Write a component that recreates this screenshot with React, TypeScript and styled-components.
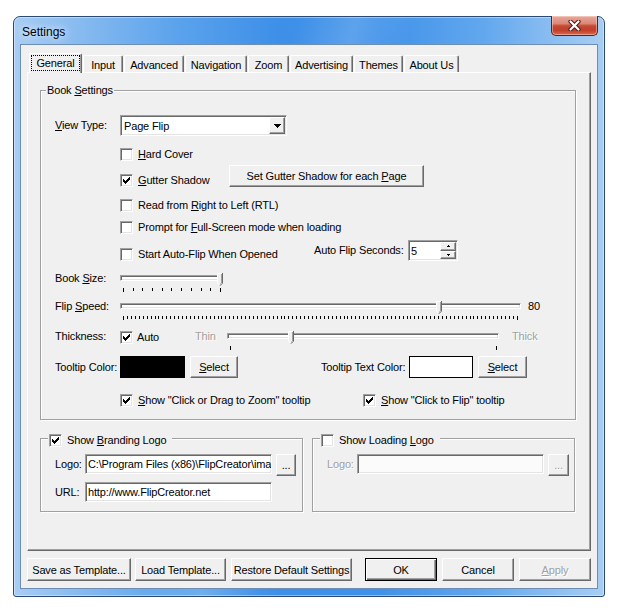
import styled, { createGlobalStyle, css } from 'styled-components';

const GlobalStyle = createGlobalStyle`
  body {
    margin: 0;
    background: #ffffff;
    color: #000000;
    font-family: 'Liberation Sans', Arial, sans-serif;
    font-size: 11px;
    letter-spacing: -0.15px;
  }
`;

const raised = css`
  border: 1px solid;
  border-color: #ffffff #696969 #696969 #ffffff;
  box-shadow: inset -1px -1px 0 #a0a0a0;
  background: #f0f0f0;
`;

const sunken = css`
  border: 1px solid;
  border-color: #a0a0a0 #ffffff #ffffff #a0a0a0;
  box-shadow: inset 1px 1px 0 #696969, inset -1px -1px 0 #e3e3e3;
`;

const Page = styled.div`
  padding: 16px 0 0 13px;
`;

const Window = styled.div`
  box-sizing: border-box;
  display: flex;
  flex-direction: column;
  width: 592px;
  height: 581px;
  padding: 0 6px 7px;
  border: 1px solid #2a4a73;
  border-radius: 7px 7px 3px 3px;
  background:
    linear-gradient(105deg, rgba(255, 255, 255, 0) 38%, rgba(255, 255, 255, 0.16) 46%, rgba(255, 255, 255, 0) 54%),
    linear-gradient(90deg, #a8cdf3 0%, #8abcf0 10%, #5aa2ec 28%, #3d8fe8 45%, #3f91e9 62%, #63a8ee 80%, #94c3f2 94%, #a8cdf3 100%);
  box-shadow: inset 0 0 0 1px rgba(255, 255, 255, 0.4);
`;

const TitleBar = styled.div`
  display: flex;
  height: 27px;
  padding-left: 2px;
`;

const Title = styled.span`
  align-self: center;
  margin-top: 3px;
  font-size: 12px;
  letter-spacing: 0;
  text-shadow: 0 0 6px rgba(255, 255, 255, 0.9), 0 0 12px rgba(255, 255, 255, 0.6);
`;

const CloseButton = styled.div`
  box-sizing: border-box;
  display: flex;
  align-items: center;
  justify-content: center;
  width: 47px;
  height: 20px;
  margin: -1px 0 0 auto;
  border: 1px solid #5b2219;
  border-top: none;
  border-radius: 0 0 5px 5px;
  background: linear-gradient(#e9a99c 0%, #dc8776 40%, #c24a33 52%, #c23f2a 75%, #d9684f 100%);
  box-shadow: inset 0 0 0 1px rgba(255, 230, 220, 0.45);
`;

const Client = styled.div`
  flex: 1;
  display: flex;
  flex-direction: column;
  padding: 8px 6px 7px;
  border: 1px solid #6e8db4;
  background: #f0f0f0;
`;

const TabStrip = styled.div`
  display: flex;
  align-items: flex-end;
  height: 19px;
  padding-left: 2px;
`;

const Tab = styled.div<{ $w: number; $active?: boolean }>`
  box-sizing: border-box;
  display: flex;
  align-items: center;
  justify-content: center;
  width: ${(p) => p.$w}px;
  height: 17px;
  margin-right: 1px;
  padding-top: 1px;
  border: 1px solid;
  border-color: #ffffff #696969 transparent #ffffff;
  border-bottom: none;
  border-radius: 2px 2px 0 0;
  box-shadow: inset -1px 0 0 #a0a0a0;
  white-space: nowrap;

  ${(p) =>
    p.$active &&
    css`
      position: relative;
      z-index: 1;
      height: 20px;
      margin-bottom: -1px;
      padding: 0 0 2px;
      background: #f0f0f0;
    `}
`;

const FocusRing = styled.span`
  padding: 1px 4px;
  border: 1px dotted #000000;
  line-height: 12px;
`;

const Panel = styled.div`
  flex: 1;
  display: flex;
  flex-direction: column;
  padding: 11px 14px 0 12px;
  border: 1px solid;
  border-color: #ffffff #696969 #696969 #ffffff;
  box-shadow: inset -1px -1px 0 #a0a0a0;
`;

const Group = styled.fieldset`
  min-width: 0;
  margin: 0;
  padding: 0;
  border: 1px solid #a0a0a0;
  box-shadow: inset 1px 1px 0 #ffffff, 1px 1px 0 #ffffff;
`;

const Legend = styled.legend<{ $pt?: number; $pr?: number; $ml: number }>`
  margin-left: ${(p) => p.$ml}px;
  padding: ${(p) => p.$pt ?? 0}px ${(p) => p.$pr ?? 1}px 0 1px;
  line-height: 13px;
  background: #f0f0f0;
`;

const GroupBody = styled.div<{ $pb: number }>`
  display: flex;
  flex-direction: column;
  padding: 0 0 ${(p) => p.$pb}px 14px;
`;

const LogoGroups = styled.div`
  display: grid;
  grid-template-columns: 263px 263px;
  column-gap: 9px;
  margin-top: 10px;
`;

const Row = styled.div<{ $mt: number; $h: number; $align?: string }>`
  display: flex;
  align-items: ${(p) => p.$align ?? 'center'};
  height: ${(p) => p.$h}px;
  margin-top: ${(p) => p.$mt}px;
`;

const FieldLabel = styled.span<{ $w?: number; $ml?: number; $lh?: number; $dim?: boolean }>`
  flex: none;
  width: ${(p) => p.$w ?? 65}px;
  margin-left: ${(p) => p.$ml ?? 0}px;
  line-height: ${(p) => p.$lh ?? 13}px;
  white-space: nowrap;
  color: ${(p) => (p.$dim ? '#a0a0a0' : 'inherit')};
  text-shadow: ${(p) => (p.$dim ? '1px 1px 0 #ffffff' : 'none')};
`;

const SideLabel = styled.span<{ $w: number }>`
  flex: none;
  align-self: stretch;
  display: flex;
  align-items: center;
  width: ${(p) => p.$w}px;
  white-space: nowrap;
`;

const CheckItem = styled.label<{ $w?: number; $gap?: number }>`
  flex: none;
  display: flex;
  align-items: center;
  gap: ${(p) => p.$gap ?? 5}px;
  width: ${(p) => (p.$w ? `${p.$w}px` : 'auto')};
  line-height: 13px;
  white-space: nowrap;
`;

const Box = styled.span`
  box-sizing: border-box;
  flex: none;
  display: flex;
  align-items: center;
  justify-content: center;
  width: 13px;
  height: 13px;
  background: #ffffff;
  ${sunken}
`;

const Button = styled.button<{ $w: number; $h?: number; $ml?: number; $default?: boolean }>`
  box-sizing: border-box;
  flex: none;
  width: ${(p) => p.$w}px;
  height: ${(p) => p.$h ?? 23}px;
  margin-left: ${(p) => p.$ml ?? 0}px;
  padding: 0;
  font: inherit;
  letter-spacing: inherit;
  color: #000000;
  ${raised}

  ${(p) =>
    p.$default &&
    css`
      border: 1px solid #000000;
      box-shadow: inset 1px 1px 0 #ffffff, inset -1px -1px 0 #696969, inset -2px -2px 0 #a0a0a0;
    `}

  &:disabled {
    color: #a0a0a0;
    text-shadow: 1px 1px 0 #ffffff;
  }
`;

const Combo = styled.div`
  box-sizing: border-box;
  display: flex;
  align-items: center;
  width: 167px;
  height: 21px;
  padding: 1px 1px 1px 3px;
  background: #ffffff;
  ${sunken}
`;

const ComboText = styled.span`
  flex: 1;
`;

const ComboButton = styled.span`
  box-sizing: border-box;
  display: flex;
  align-items: center;
  justify-content: center;
  width: 16px;
  height: 17px;
  ${raised}
`;

const Spin = styled.div`
  box-sizing: border-box;
  display: flex;
  width: 50px;
  height: 21px;
  padding: 1px 1px 1px 2px;
  background: #ffffff;
  ${sunken}
`;

const SpinText = styled.span`
  flex: 1;
  align-self: center;
`;

const SpinButtons = styled.div`
  display: flex;
  flex-direction: column;
  width: 16px;
`;

const SpinButton = styled.span`
  box-sizing: border-box;
  flex: 1;
  display: flex;
  align-items: center;
  justify-content: center;
  ${raised}
`;

const SliderBox = styled.div<{ $w: number }>`
  position: relative;
  flex: none;
  display: flex;
  flex-direction: column;
  width: ${(p) => p.$w}px;
  height: 19px;
`;

const Track = styled.div`
  box-sizing: border-box;
  height: 6px;
  margin-top: 2px;
  background: #ffffff;
  ${sunken}
`;

const Ticks = styled.div<{ $w: number }>`
  display: flex;
  justify-content: space-between;
  width: ${(p) => p.$w}px;
  height: 4px;
  margin: 7px 0 0 3px;
`;

const Tick = styled.span`
  width: 1px;
  height: 3px;
  background: #000000;

  &:first-child,
  &:last-child {
    height: 4px;
  }
`;

const Thumb = styled.svg`
  position: absolute;
  top: 0;
`;

const SliderText = styled.span<{ $w?: number; $ml?: number; $dim?: boolean }>`
  flex: none;
  width: ${(p) => (p.$w ? `${p.$w}px` : 'auto')};
  margin-left: ${(p) => p.$ml ?? 0}px;
  line-height: 11px;
  color: ${(p) => (p.$dim ? '#a0a0a0' : 'inherit')};
  text-shadow: ${(p) => (p.$dim ? '1px 1px 0 #ffffff' : 'none')};
`;

const Swatch = styled.span<{ $color: string; $w: number; $ml?: number }>`
  box-sizing: border-box;
  flex: none;
  width: ${(p) => p.$w}px;
  height: 22px;
  margin-left: ${(p) => p.$ml ?? 0}px;
  border: 1px solid #000000;
  background: ${(p) => p.$color};
`;

const TextField = styled.div<{ $w: number; $disabled?: boolean }>`
  box-sizing: border-box;
  flex: none;
  display: flex;
  align-items: center;
  width: ${(p) => p.$w}px;
  height: 20px;
  padding: 0 2px;
  overflow: hidden;
  white-space: nowrap;
  background: ${(p) => (p.$disabled ? '#fbfbfb' : '#ffffff')};
  ${sunken}
`;

const ButtonRow = styled.div`
  display: flex;
  margin-top: 7px;
`;

const CheckMark = () => (
  <svg width="7" height="7" viewBox="0 0 7 7" shapeRendering="crispEdges">
    <path
      d="M6 0h1v1h-1z M5 1h2v1h-2z M0 2h1v1h-1z M4 2h3v1h-3z M0 3h2v1h-2z M3 3h3v1h-3z M0 4h5v1h-5z M1 5h3v1h-3z M2 6h1v1h-1z"
      fill="#000000"
    />
  </svg>
);

const Check = ({ checked, label, w, gap }: { checked?: boolean; label: React.ReactNode; w?: number; gap?: number }) => (
  <CheckItem $w={w} $gap={gap}>
    <Box>{checked && <CheckMark />}</Box>
    <span>{label}</span>
  </CheckItem>
);

const Slider = ({ width, frac, ticks }: { width: number; frac: number; ticks: number }) => {
  const range = width - 6;
  return (
    <SliderBox $w={width}>
      <Track />
      <Ticks $w={range + 1}>
        {Array.from({ length: ticks }, (_, i) => (
          <Tick key={i} />
        ))}
      </Ticks>
      <Thumb width="6" height="13" viewBox="0 0 6 13" style={{ left: Math.round(frac * range) }}>
        <path d="M0 0H6V10L3 13L0 10Z" fill="#f0f0f0" />
        <path d="M0.5 10V0.5H5" stroke="#ffffff" fill="none" />
        <path d="M5.5 0V10.2L3 12.7" stroke="#696969" fill="none" />
        <path d="M4.5 1V10L2.8 11.7" stroke="#a0a0a0" fill="none" />
        <path d="M0.5 10L2.6 12.1" stroke="#ffffff" fill="none" />
      </Thumb>
    </SliderBox>
  );
};

const tabs = [
  { label: 'General', width: 53 },
  { label: 'Input', width: 40 },
  { label: 'Advanced', width: 60 },
  { label: 'Navigation', width: 62 },
  { label: 'Zoom', width: 41 },
  { label: 'Advertising', width: 63 },
  { label: 'Themes', width: 49 },
  { label: 'About Us', width: 55 },
];

const App = () => {
  return (
    <>
      <GlobalStyle />
      <Page>
        <Window>
          <TitleBar>
            <Title>Settings</Title>
            <CloseButton>
              <svg width="13" height="11" viewBox="0 0 13 11">
                <path d="M2.5 1.5L10.5 9.5M10.5 1.5L2.5 9.5" stroke="#4a1a14" strokeWidth="4.2" strokeLinecap="round" />
                <path d="M2.5 1.5L10.5 9.5M10.5 1.5L2.5 9.5" stroke="#ffffff" strokeWidth="2.2" strokeLinecap="round" />
              </svg>
            </CloseButton>
          </TitleBar>
          <Client>
            <TabStrip>
              {tabs.map((tab, i) => (
                <Tab key={tab.label} $w={tab.width} $active={i === 0}>
                  {i === 0 ? <FocusRing>{tab.label}</FocusRing> : tab.label}
                </Tab>
              ))}
            </TabStrip>
            <Panel>
              <Group>
                <Legend $ml={5}>
                  Book <u>S</u>ettings
                </Legend>
                <GroupBody $pb={12}>
                  <Row $mt={18} $h={21}>
                    <FieldLabel>
                      <u>V</u>iew Type:
                    </FieldLabel>
                    <Combo>
                      <ComboText>Page Flip</ComboText>
                      <ComboButton>
                        <svg width="7" height="4" viewBox="0 0 7 4" shapeRendering="crispEdges">
                          <path d="M0 0h7v1H0z M1 1h5v1H1z M2 2h3v1H2z M3 3h1v1H3z" fill="#000000" />
                        </svg>
                      </ComboButton>
                    </Combo>
                  </Row>
                  <Row $mt={12} $h={13}>
                    <FieldLabel />
                    <Check
                      label={
                        <>
                          <u>H</u>ard Cover
                        </>
                      }
                    />
                  </Row>
                  <Row $mt={4} $h={22} $align="flex-end">
                    <FieldLabel />
                    <Check
                      checked
                      w={109}
                      label={
                        <>
                          <u>G</u>utter Shadow
                        </>
                      }
                    />
                    <Button $w={195} $h={22}>
                      Set Gutter Shadow for each <u>P</u>age
                    </Button>
                  </Row>
                  <Row $mt={12} $h={13}>
                    <FieldLabel />
                    <Check
                      label={
                        <>
                          Read from <u>R</u>ight to Left (RTL)
                        </>
                      }
                    />
                  </Row>
                  <Row $mt={9} $h={13}>
                    <FieldLabel />
                    <Check
                      label={
                        <>
                          Prompt for <u>F</u>ull-Screen mode when loading
                        </>
                      }
                    />
                  </Row>
                  <Row $mt={5} $h={22} $align="flex-end">
                    <FieldLabel />
                    <Check w={194} label="Start Auto-Flip When Opened" />
                    <SideLabel $w={94}>Auto Flip Seconds:</SideLabel>
                    <Spin>
                      <SpinText>5</SpinText>
                      <SpinButtons>
                        <SpinButton>
                          <svg width="3" height="2" viewBox="0 0 3 2" shapeRendering="crispEdges">
                            <path d="M1 0h1v1H1z M0 1h3v1H0z" fill="#000000" />
                          </svg>
                        </SpinButton>
                        <SpinButton>
                          <svg width="3" height="2" viewBox="0 0 3 2" shapeRendering="crispEdges">
                            <path d="M0 0h3v1H0z M1 1h1v1H1z" fill="#000000" />
                          </svg>
                        </SpinButton>
                      </SpinButtons>
                    </Spin>
                  </Row>
                  <Row $mt={12} $h={19} $align="flex-start">
                    <FieldLabel $lh={11}>
                      Book <u>S</u>ize:
                    </FieldLabel>
                    <Slider width={103} frac={1} ticks={11} />
                  </Row>
                  <Row $mt={9} $h={19} $align="flex-start">
                    <FieldLabel $lh={11}>
                      Flip <u>S</u>peed:
                    </FieldLabel>
                    <Slider width={401} frac={0.8} ticks={101} />
                    <SliderText $ml={7}>80</SliderText>
                  </Row>
                  <Row $mt={11} $h={19} $align="flex-start">
                    <FieldLabel $lh={11}>Thickness:</FieldLabel>
                    <Check checked w={75} gap={4} label="Auto" />
                    <SliderText $w={32} $dim>
                      Thin
                    </SliderText>
                    <Slider width={272} frac={61 / 266} ticks={2} />
                    <SliderText $ml={13} $dim>
                      Thick
                    </SliderText>
                  </Row>
                  <Row $mt={6} $h={22}>
                    <FieldLabel>Tooltip Color:</FieldLabel>
                    <Swatch $color="#000000" $w={65} />
                    <Button $w={48} $h={22} $ml={5}>
                      <u>S</u>elect
                    </Button>
                    <FieldLabel $w={87} $ml={83}>
                      Tooltip Text Color:
                    </FieldLabel>
                    <Swatch $color="#ffffff" $w={64} $ml={1} />
                    <Button $w={49} $h={22} $ml={5}>
                      <u>S</u>elect
                    </Button>
                  </Row>
                  <Row $mt={16} $h={13}>
                    <FieldLabel />
                    <Check
                      checked
                      w={243}
                      label={
                        <>
                          <u>S</u>how "Click or Drag to Zoom" tooltip
                        </>
                      }
                    />
                    <Check
                      checked
                      label={
                        <>
                          <u>S</u>how "Click to Flip" tooltip
                        </>
                      }
                    />
                  </Row>
                </GroupBody>
              </Group>
              <LogoGroups>
                <Group>
                  <Legend $ml={7} $pt={4} $pr={6}>
                    <Check
                      checked
                      label={
                        <>
                          Show <u>B</u>randing Logo
                        </>
                      }
                    />
                  </Legend>
                  <GroupBody $pb={9}>
                    <Row $mt={7} $h={22} $align="flex-start">
                      <FieldLabel $w={30} $lh={20}>
                        Logo:
                      </FieldLabel>
                      <TextField $w={187}>C:\Program Files (x86)\FlipCreator\ima</TextField>
                      <Button $w={20} $h={22} $ml={4}>
                        ...
                      </Button>
                    </Row>
                    <Row $mt={6} $h={20} $align="flex-start">
                      <FieldLabel $w={30} $lh={20}>
                        URL:
                      </FieldLabel>
                      <TextField $w={187}>http://www.FlipCreator.net</TextField>
                    </Row>
                  </GroupBody>
                </Group>
                <Group>
                  <Legend $ml={7} $pt={4} $pr={6}>
                    <Check
                      label={
                        <>
                          Show Loading <u>L</u>ogo
                        </>
                      }
                    />
                  </Legend>
                  <GroupBody $pb={9}>
                    <Row $mt={7} $h={22} $align="flex-start">
                      <FieldLabel $w={30} $lh={20} $dim>
                        Logo:
                      </FieldLabel>
                      <TextField $w={187} $disabled />
                      <Button $w={21} $h={22} $ml={4} disabled>
                        ...
                      </Button>
                    </Row>
                  </GroupBody>
                </Group>
              </LogoGroups>
            </Panel>
            <ButtonRow>
              <Button $w={104}>Save as Template...</Button>
              <Button $w={91} $ml={4}>
                Load Template...
              </Button>
              <Button $w={121} $ml={5}>
                Restore Default Settings
              </Button>
              <Button $w={72} $ml={13} $default>
                OK
              </Button>
              <Button $w={72} $ml={5}>
                Cancel
              </Button>
              <Button $w={72} $ml={5} disabled>
                <u>A</u>pply
              </Button>
            </ButtonRow>
          </Client>
        </Window>
      </Page>
    </>
  );
};

export default App;
